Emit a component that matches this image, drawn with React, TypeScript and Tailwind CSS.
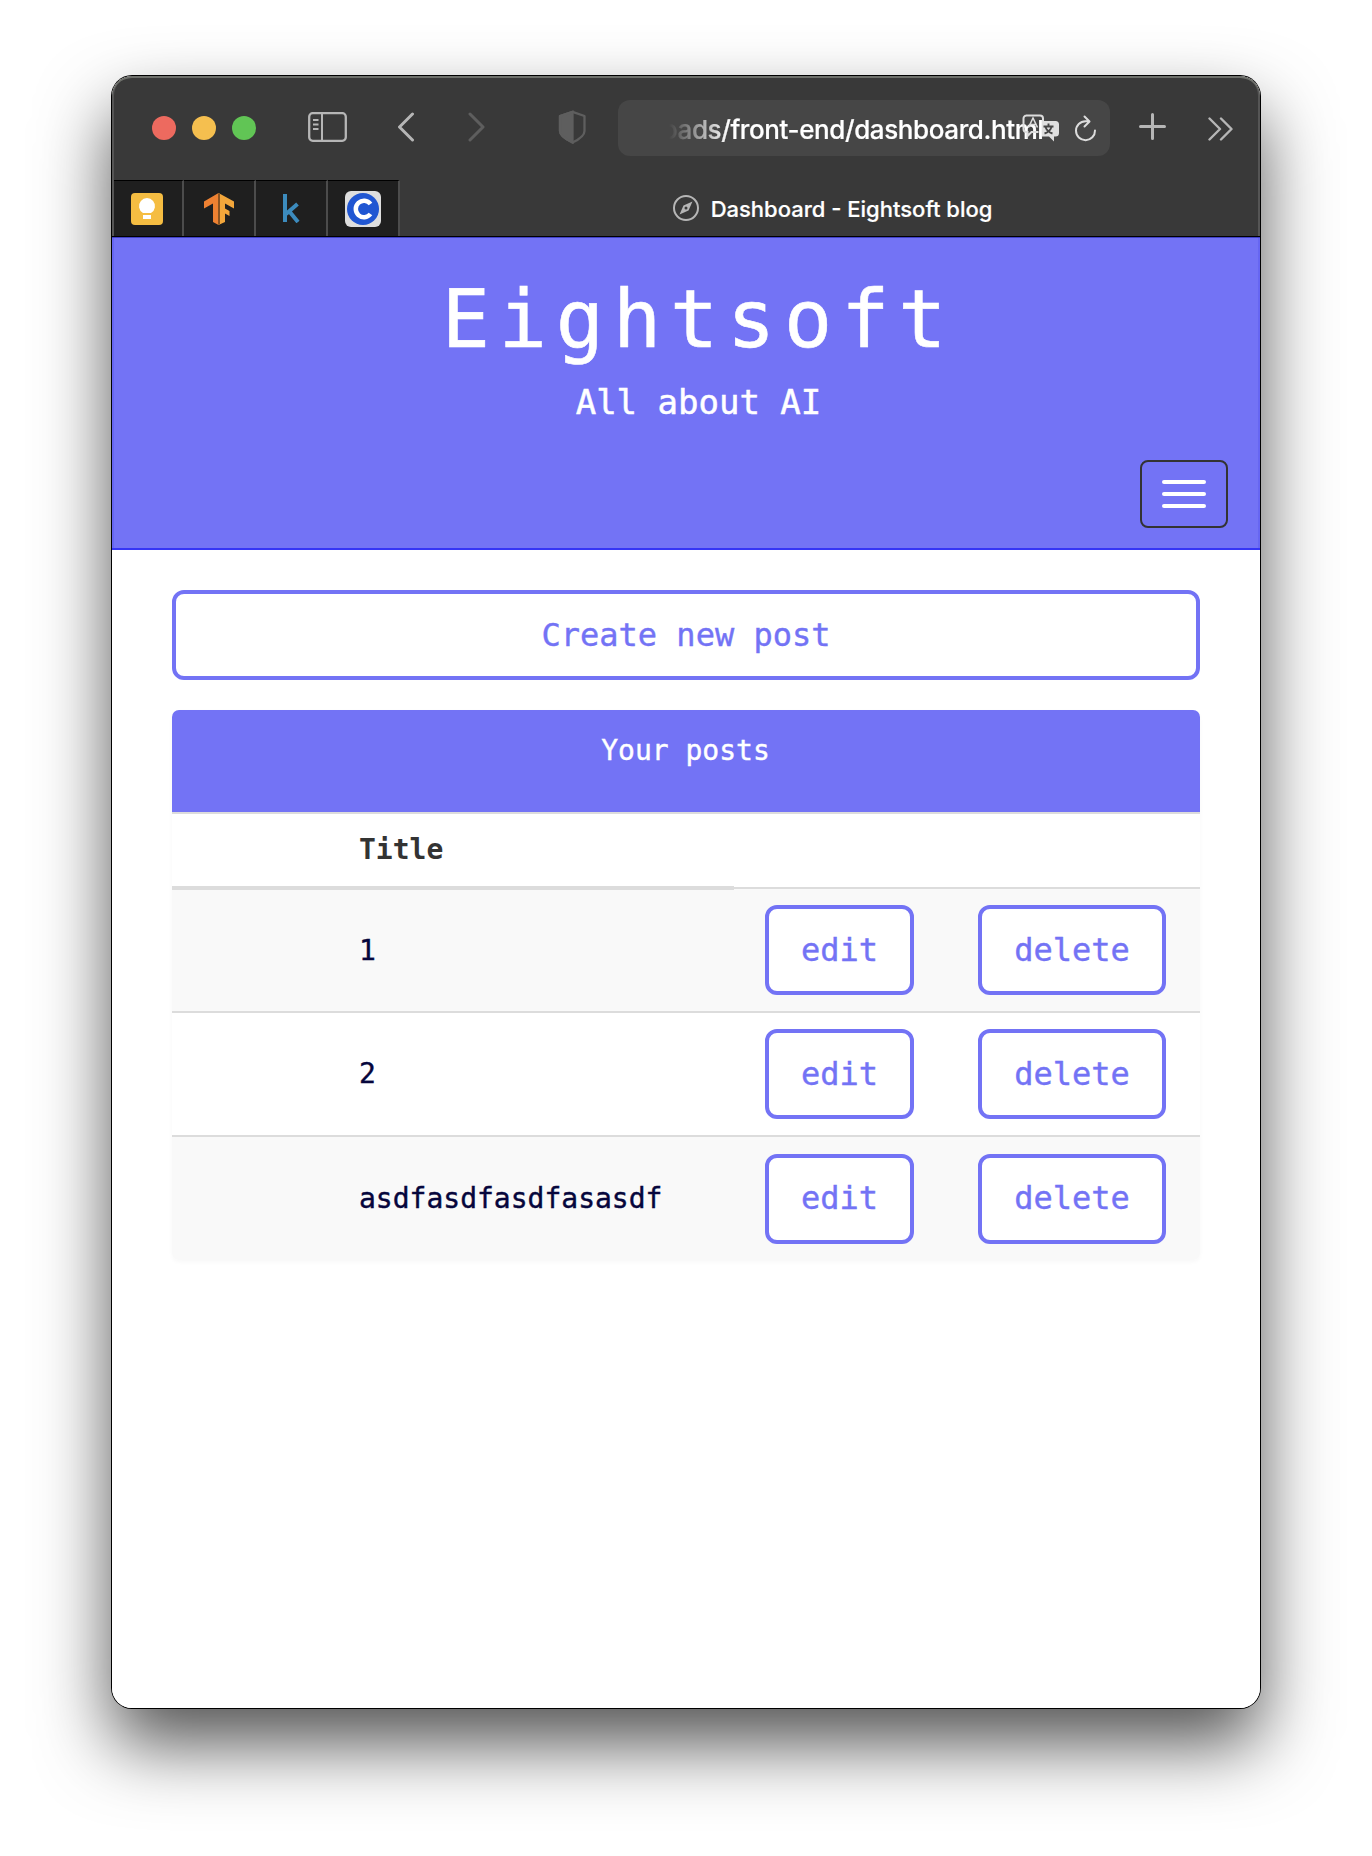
import React from "react";

const posts = ["1", "2", "asdfasdfasdfasasdf"];

function OutlineButton({ label, className = "" }: { label: string; className?: string }) {
  return (
    <button className={`h-[90px] rounded-[12px] border-4 border-[#7373f5] bg-white px-8 text-[32px] leading-[48px] pb-[1px] text-[#7373f5] ${className}`}>
      {label}
    </button>
  );
}

function PinnedTab({ children, className = "" }: { children: React.ReactNode; className?: string }) {
  return (
    <div className={`flex h-full items-center justify-center border-r-2 border-t border-r-[#4c4c4c] border-t-black bg-[#1f1f1f] ${className}`}>
      {children}
    </div>
  );
}

function Toolbar() {
  return (
    <div className="flex h-[104px] items-start pl-[40px] text-[#b6b6b6]">
      <div className="mt-[40px] flex gap-4">
        <span className="size-6 rounded-full bg-[#ed6a5f]" />
        <span className="size-6 rounded-full bg-[#f5bf4f]" />
        <span className="size-6 rounded-full bg-[#61c555]" />
      </div>
      <svg className="ml-[52px] mt-[36px]" width="39" height="30" viewBox="0 0 39 30" fill="none" stroke="currentColor" strokeWidth="2.300">
        <rect x="1.200" y="1.200" width="36.600" height="27.600" rx="3.500" />
        <path d="M14 1v28M5 8h5.500M5 12.500h5.500M5 17h5.500" strokeWidth="2" />
      </svg>
      <svg className="ml-[50px] mt-[36px]" width="18" height="30" viewBox="0 0 18 30" fill="none" stroke="currentColor" strokeWidth="3" strokeLinecap="round" strokeLinejoin="round">
        <path d="M15.500 2L2.500 15l13 13" />
      </svg>
      <svg className="ml-[53px] mt-[36px]" width="18" height="30" viewBox="0 0 18 30" fill="none" stroke="#5e5e5e" strokeWidth="3" strokeLinecap="round" strokeLinejoin="round">
        <path d="M2 2l13 13L2 28" />
      </svg>
      <svg className="ml-[72px] mt-[34px]" width="28" height="34" viewBox="0 0 28 34" fill="none" stroke="#5e5e5e" strokeWidth="2.300">
        <path d="M14.500 1.800L2 6v15c0 4.500 5 8 12.500 11.500C22 29 26.500 25.500 26.500 21V6z" strokeLinejoin="round" />
        <path d="M14.500 1.800L2 6v15c0 4.500 5 8 12.500 11.500z" fill="#5e5e5e" />
      </svg>
      <div className="relative ml-[32px] mt-[24px] flex h-[56px] w-[492px] items-center rounded-[12px] bg-[#464646] font-['Inter']">
        <div className="ml-[51px] w-[374px] overflow-hidden whitespace-nowrap text-[26px] font-medium leading-[40px] tracking-[-0.4px] text-white [-webkit-text-stroke:0.2px] [mask-image:linear-gradient(to_right,transparent,black_60px)]">
          <span className="-ml-[7px] mt-[3px] inline-block">oads/front-end/dashboard.html</span>
        </div>
        <svg className="absolute left-[404px] top-[14px]" width="38" height="29" viewBox="0 0 38 29" fill="none">
          <path d="M4 1.500h14a3 3 0 0 1 3 3v4M1.500 15V4.500a3 3 0 0 1 3-3M1.500 15a3 3 0 0 0 3 3h1v4l4-4h7" stroke="#dcdcdc" strokeWidth="2" />
          <path d="M6.500 13.500L11 4l4.500 9.500M8 10.500h6" stroke="#dcdcdc" strokeWidth="1.600" />
          <path d="M20 7h13.500A3.500 3.500 0 0 1 37 10.500V19a3.500 3.500 0 0 1-3.500 3.500H32v5l-5-5h-7z" fill="#dfdfdf" />
          <path d="M26.500 9.500v3M21.500 12.500h10M23.500 13c1 3 4 5.500 7 6.500M29.500 13c-1 3-4 5.500-7 6.500" stroke="#464646" strokeWidth="1.900" />
        </svg>
        <svg className="absolute left-[456px] top-[15px]" width="23" height="28" viewBox="0 0 23 28" fill="none" stroke="#dcdcdc" strokeWidth="2" strokeLinecap="round" strokeLinejoin="round">
          <path d="M15 6.200h-3.500A9.500 9.500 0 1 0 21 15.500M10.500 1.500l5 5-5 5" />
        </svg>
      </div>
      <svg className="ml-[29px] mt-[37px]" width="27" height="27" viewBox="0 0 27 27" fill="none" stroke="currentColor" strokeWidth="3" strokeLinecap="round">
        <path d="M13.500 1.500v24M1.500 13.500h24" />
      </svg>
      <svg className="ml-[42px] mt-[41px]" width="25" height="24" viewBox="0 0 25 24" fill="none" stroke="currentColor" strokeWidth="2.400" strokeLinecap="round" strokeLinejoin="round">
        <path d="M1.500 1.500L12 12 1.500 22.500M13 1.500L23.500 12 13 22.500" />
      </svg>
    </div>
  );
}

function TabBar() {
  return (
    <div className="flex h-[57px] border-b border-black pl-[2px]">
      <PinnedTab className="w-[70px] pr-[2px]">
        <svg width="32" height="32" viewBox="0 0 32 32">
          <rect width="32" height="32" rx="4" fill="#f5bd42" />
          <path d="M12 20a8 8 0 1 1 8 0z" fill="#fff" />
          <rect x="12" y="22" width="8" height="4" fill="#fff" />
        </svg>
      </PinnedTab>
      <PinnedTab className="w-[72px]">
        <svg width="30" height="32" viewBox="0 0 30 32">
          <path d="M14.500 0L0 8.500v7L9 10.500v18.500l5.500 3z" fill="#ee8132" />
          <path d="M14.500 0L30 8.500v7L21 10.500v5l4.500 2.500v5L21 20.500V29l-6.500 3z" fill="#f2a63b" />
          <path d="M14 .500h2v31h-2z" fill="#8c5522" />
        </svg>
      </PinnedTab>
      <PinnedTab className="w-[72px]">
        <svg width="18" height="29" viewBox="0 0 18 29" fill="none" stroke="#3c8bbd" strokeWidth="4">
          <path d="M3 0v28M15.500 10L4 20M7 17l9 11" />
        </svg>
      </PinnedTab>
      <PinnedTab className="w-[72px]">
        <svg width="36" height="36" viewBox="0 0 36 36">
          <rect width="36" height="36" rx="6" fill="#dedede" />
          <circle cx="18" cy="18" r="16" fill="#2056d2" />
          <path d="M25.500 13A8.200 8.200 0 1 0 25.500 23" fill="none" stroke="#fff" strokeWidth="4.500" />
        </svg>
      </PinnedTab>
      <div className="flex flex-1 items-center justify-center gap-3 pl-[5px] font-['Inter'] text-[22px] font-medium text-white [-webkit-text-stroke:0.2px]">
        <svg width="26" height="26" viewBox="0 0 26 26" fill="none">
          <circle cx="13" cy="13" r="12" stroke="#b6b6b6" strokeWidth="2" />
          <path d="M19.500 6.500l-4 9-9 4 4-9z" fill="#b6b6b6" />
          <circle cx="13" cy="13" r="1.500" fill="#393939" />
        </svg>
        <span className="whitespace-nowrap pt-[2px]">Dashboard - Eightsoft blog</span>
      </div>
    </div>
  );
}

export default function App() {
  return (
    <div className="h-[1856px] w-[1372px] overflow-hidden bg-white pl-[112px] pt-[76px] font-['DejaVu_Sans_Mono',monospace]">
      <div className="h-[1632px] w-[1148px] rounded-[20px] shadow-[0_0_0_1px_#000,0_36px_72px_rgba(0,0,0,0.68)]">
        <div className="h-full overflow-hidden rounded-[20px] bg-white">
          <div className="rounded-t-[20px] bg-[#393939] shadow-[inset_0_2px_0_#6e706b,inset_2px_0_0_#555,inset_-2px_0_0_#555]">
            <Toolbar />
            <TabBar />
          </div>
          <header className="h-[313px] border-b-2 border-[#3535f5] bg-[#7373f5] text-white shadow-[inset_0_1px_0_#4040c8,inset_2px_0_0_#6666f2,inset_-2px_0_0_#6666f2]">
            <h1 className="pt-[35px] pl-[25px] text-center text-[80px] leading-[96px] tracking-[8.9px] [-webkit-text-stroke:0.6px]">Eightsoft</h1>
            <p className="mt-[9px] pl-[25px] text-center text-[34px] leading-[51px] [-webkit-text-stroke:0.5px]">All about AI</p>
            <div className="mt-[32px] flex justify-end pr-[32px]">
              <button className="flex h-[68px] w-[88px] flex-col items-center justify-center gap-2 rounded-[8px] border-2 border-[#333]">
                <span className="h-1 w-11 rounded-full bg-white" />
                <span className="h-1 w-11 rounded-full bg-white" />
                <span className="h-1 w-11 rounded-full bg-white" />
              </button>
            </div>
          </header>
          <main className="px-[60px] pt-[40px] [-webkit-text-stroke:0.4px]">
            <OutlineButton label="Create new post" className="w-full" />
            <section className="mt-[30px] overflow-hidden rounded-[7px] shadow-[0_2px_4px_rgba(0,0,0,0.03)]">
              <h2 className="h-[102px] bg-[#7373f5] pt-[20px] pr-[1px] text-center text-[28px] leading-[42px] text-white">Your posts</h2>
              <table className="w-full table-fixed border-collapse text-[28px] leading-[42px]">
                <colgroup>
                  <col className="w-[172px]" />
                  <col className="w-[390px]" />
                  <col className="w-[211px]" />
                  <col className="w-[255px]" />
                </colgroup>
                <thead>
                  <tr className="h-[75px] border-t-2 border-[#dcdcdc] text-[#333]">
                    <th className="border-b-4 border-[#dcdcdc]" />
                    <th className="border-b-4 border-[#dcdcdc] px-[15px] text-left font-bold [-webkit-text-stroke:0]">Title</th>
                    <td />
                    <td />
                  </tr>
                </thead>
                <tbody>
                  {posts.map((title) => (
                    <tr key={title} className="h-[124px] border-t-2 border-[#dcdcdc] odd:bg-[#f9f9f9]">
                      <td />
                      <td className="px-[15px] text-[#06063c]">{title}</td>
                      <td className="text-center"><OutlineButton label="edit" /></td>
                      <td className="pr-[1px] text-center"><OutlineButton label="delete" /></td>
                    </tr>
                  ))}
                </tbody>
              </table>
            </section>
          </main>
        </div>
      </div>
    </div>
  );
}
